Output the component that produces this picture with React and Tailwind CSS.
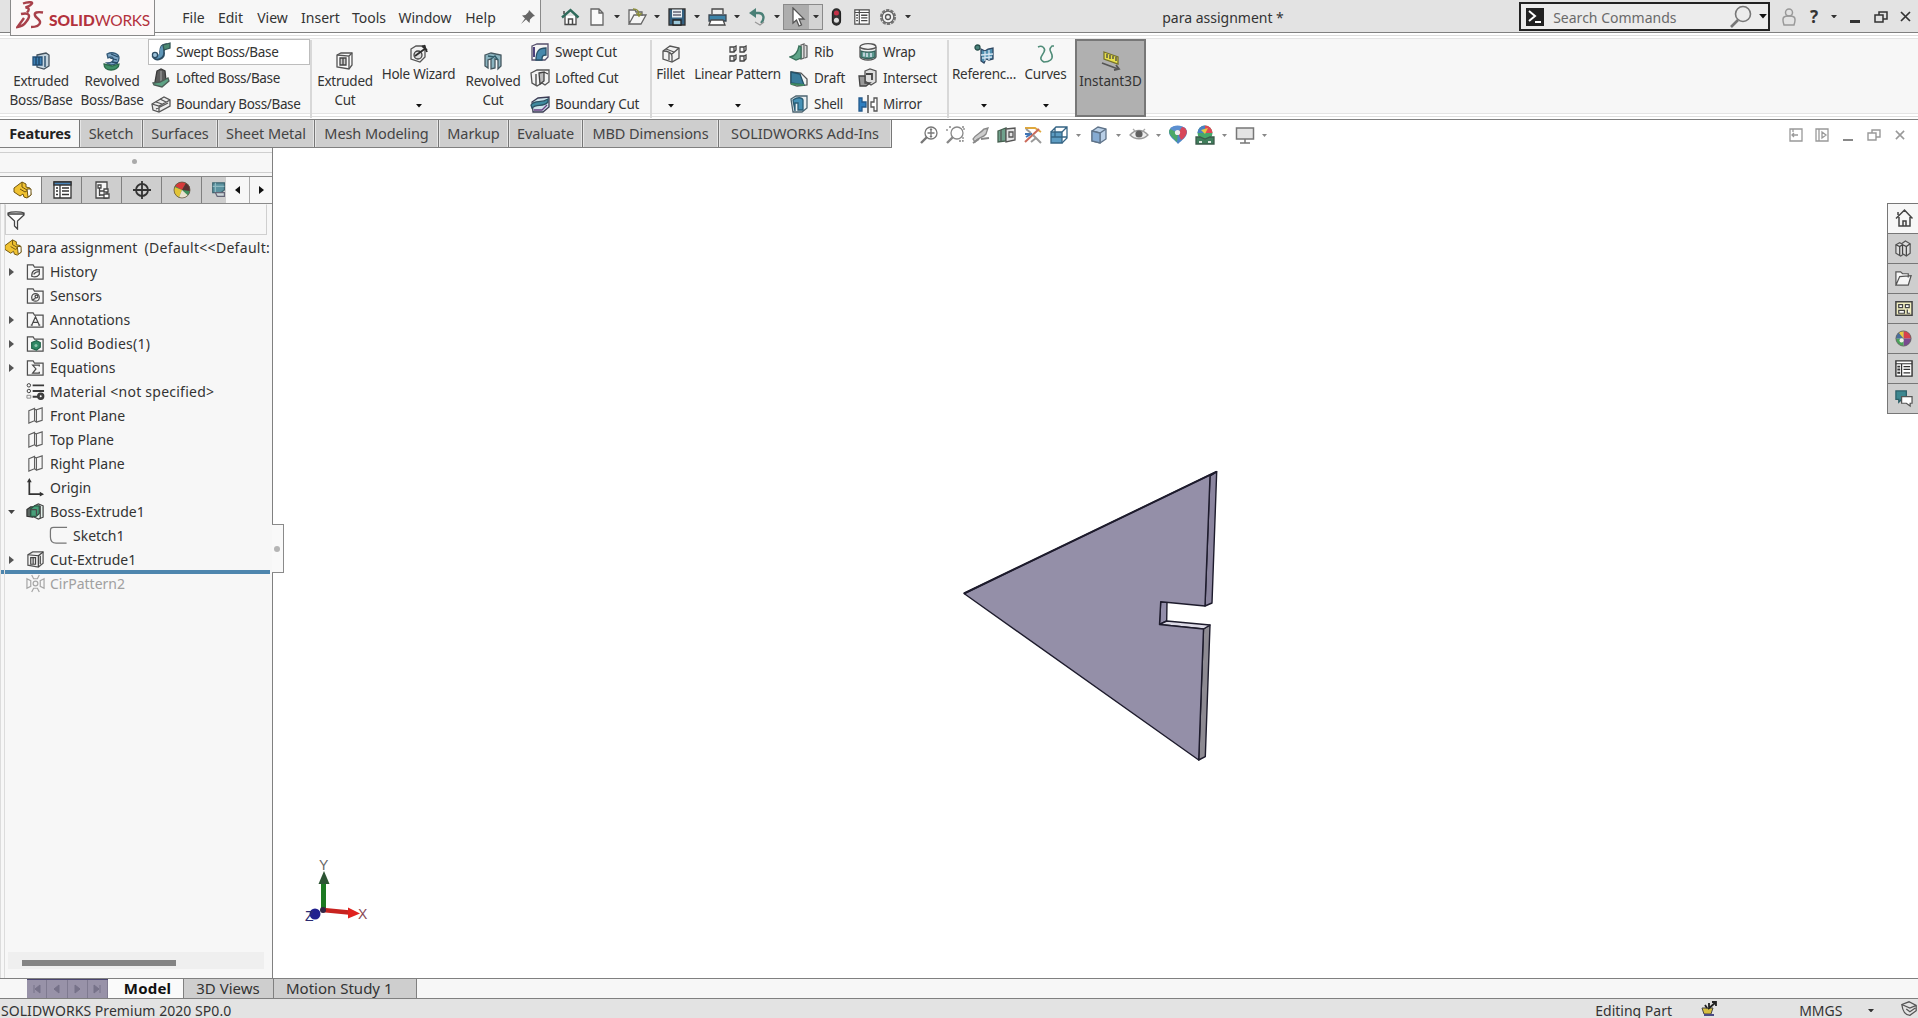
import React from "react";

const K = "#4a4a4a";
const Svg = ({ s = 20, vb = 20, children }) => (
  <svg width={s} height={s} viewBox={`0 0 ${vb} ${vb}`} fill="none" stroke={K} strokeWidth="1.3" className="shrink-0">
    {children}
  </svg>
);

const cube = (fill, edge) => (
  <>
    <path d="M3 6l6-4 8 2v10l-6 4-8-2z" fill={fill} stroke={edge} />
    <path d="M3 6l8 2 6-4M11 8v10" stroke={edge} />
  </>
);
const folder = <path d="M1.500 18V3h6l1.500 2.500h9V18z" stroke="#505050" />;
const plane = <path d="M3 5l6-2.500v13L3 18zM11 4l6-2v13l-6 2zM9 3.500l2 .500M9 15.500l2 1.500" stroke="#606060" strokeWidth="1.200" />;
const ball = (
  <g stroke="none">
    <circle cx="10" cy="10" r="8" fill="#3f8f5a" />
    <path d="M10 10L3 6a8 8 0 0 1 11-3z" fill="#d63a3a" />
    <path d="M10 10l4-7a8 8 0 0 1 4 8z" fill="#5a3030" />
    <path d="M10 10l-7.500-3A8 8 0 0 0 7 17.500z" fill="#e2c437" />
    <path d="M10 10l-3 7.500a8 8 0 0 0 9-2z" fill="#e9e2cf" />
    <circle cx="10" cy="10" r="8" fill="none" stroke="#665544" strokeWidth=".8" />
  </g>
);
const colorBall = (
  <g stroke="none">
    <path d="M10 10V2a8 8 0 0 1 8 8z" fill="#d8404c" />
    <path d="M10 10h8a8 8 0 0 1-8 8z" fill="#7a4a90" />
    <path d="M10 10v8a8 8 0 0 1-8-8z" fill="#4ba35a" />
    <path d="M10 10H2a8 8 0 0 1 8-8z" fill="#4a6f9c" />
    <path d="M10 10L5 4a8 8 0 0 1 5-2z" fill="#e8c840" />
    <circle cx="8" cy="12" r="2.200" fill="#f2eee8" />
    <circle cx="10" cy="10" r="8" stroke="#5a5a5a" strokeWidth=".8" />
  </g>
);
const part = (
  <g stroke="#6f5510" strokeWidth="1">
    <path d="M1 8l8-6 4 2v3l4 1 1 7-4 3-3-1-1-3-3 2-6-4z" fill="#f0c232" />
    <path d="M9 2v5l5 3M7 9l5 3 5-3" fill="none" />
    <path d="M14 9l4 0v6l-3 2z" fill="#fff" />
  </g>
);
const magnifier = <><circle cx="12" cy="8" r="6" /><path d="M8 12l-6 6" strokeWidth="2.400" /></>;

const I = {
  home: <><path d="M5 9v8.500h11V9" fill="#fff" /><path d="M2 10.500L10.500 3l8 7.500" stroke="#2f6b5c" strokeWidth="2.400" /><path d="M8.500 17v-5h4v5M4 4v3" strokeWidth="1.500" /></>,
  doc: <path d="M4 2h8l4 4v12H4zM12 2v4h4" fill="#fafafa" stroke="#666" />,
  open: <><path d="M2 17V3h6l1 2h6v4M2 17L7 8h12l-5 9z" fill="#f6f6f6" stroke="#666" /><path d="M6 2c5 0 6 2 6 6M9.500 6l2.500 3 2.500-3" stroke="#8a8d3a" strokeWidth="1.600" /></>,
  save: <><path d="M2 2h16v16H2z" fill="#346080" stroke="#333" /><path d="M5 2.500h10v8H5z" fill="#e8eef2" stroke="none" /><path d="M6 5h8M6 8h8" stroke="#667" /><path d="M6 13h8v5H6z" fill="#9cc8da" stroke="#222" /></>,
  print: <><path d="M5 7V2h11v5" fill="#eee" /><path d="M2 8h17v6H2z" fill="#3d83a8" stroke="#3b4650" /><path d="M4 13h12l2 5H2z" fill="#fff" /></>,
  undo: <><path d="M7 6h5c5 0 6 6 2 10" stroke="#4b8077" strokeWidth="2.400" /><path d="M9 1L2 6l7 5z" fill="#4b8077" stroke="none" /><path d="M8 15l5 3 4-3" stroke="#999" /></>,
  cursor: <path d="M6 1v15l3.500-3 2.500 6 2.500-1-2.500-6h5z" fill="#fff" stroke="#555" />,
  traffic: <><rect x="6" y="1" width="9" height="18" rx="4.500" fill="#333" stroke="#222" /><circle cx="10.500" cy="5.500" r="2.800" fill="#c33148" stroke="none" /><circle cx="10.500" cy="13.500" r="2.800" fill="#ddd" stroke="none" /></>,
  list: <><path d="M2 2h16v16H2zM7 2v16M2 5h16" fill="#fff" /><path d="M9 8h7M9 11h7M9 14h7M3.500 8h2M3.500 11h2M3.500 14h2" strokeWidth="1.600" /></>,
  gear: <><circle cx="10" cy="10" r="7" stroke="#777" strokeWidth="2.200" strokeDasharray="3.300 1.100" /><circle cx="10" cy="10" r="5.800" stroke="#666" fill="#f3f3f3" /><circle cx="10" cy="10" r="2.500" stroke="#555" /></>,
  extrude: <><path d="M6 4l9-2 3 2v11l-5 3-7-2z" fill="#c4d4de" stroke="#44525e" /><path d="M2 6h9v8H2z" fill="#3c7fb4" stroke="#245078" /><path d="M5 6v8M8 6v8M14 5v11" stroke="#1d4262" /></>,
  revolve: <><path d="M5 3c6-3 12 0 12 4s-3 7-9 7l-3-2c6 0 7-3 6-5S8 6 6 7z" fill="#7ba4c4" stroke="#335a78" /><path d="M8 7l7 2M9 3l7 3M10 11l6 1" stroke="#244a66" /><path d="M2 13l8 2 7-2c0 4-4 6-8 6s-7-2-7-6z" fill="#3f9068" stroke="#2c6a4a" /></>,
  sweep: <><path d="M3 13c3 5 9 2 8-3 0-4 1-6 5-6" stroke="#2c4c62" strokeWidth="5.600" /><path d="M3 13c3 4 8 1 7.500-3 0-4 1-6 5-6" stroke="#5f96b8" strokeWidth="3.400" /><circle cx="4" cy="13" r="2.600" fill="#9cc2da" stroke="#2c4c62" /><path d="M12 3l7-2v5l-6 2z" fill="#4c8a72" stroke="#355" /></>,
  loft: <><path d="M6 3l4-2 4 2 1 10-5 3-6-2z" fill="#5c5c5c" stroke="#3a3a3a" /><path d="M10 3v13" stroke="#999" /><path d="M2 15l7-1 8-4 1 3-7 6-8-2z" fill="#5da284" stroke="#4c5c55" /></>,
  boundary: <><path d="M1 10l12-7 6 3v6L8 18l-6-2z" fill="#ececec" stroke="#555" /><path d="M1 10l7 2 11-6M8 12v6M5 8l6 2M9 5l6 3M5 15l12-6" stroke="#555" /></>,
  cut: <><path d="M2 4l4-2h11v12l-3 4-12-2z" fill="#fafafa" stroke="#555" /><path d="M2 4l12 1v13M14 5l3-3" stroke="#555" /><path d="M5 7h6v7H5zM8 7v7" stroke="#444" fill="#ccc" /></>,
  hole: <><path d="M2 5l5-3h9v11l-5 5-9-3z" fill="#f2f2f2" stroke="#555" /><circle cx="9" cy="11" r="4" fill="#ddd" stroke="#444" /><path d="M6 12L17 4M13 2l5 4M15 1l3 7" stroke="#2e2e2e" strokeWidth="1.800" /></>,
  revcut: <><path d="M2 4l6-2 10 2v11l-3 3V9l-3-1v9l-4 1V8L5 9v8l-3-2z" fill="#8bb4c0" stroke="#465860" /><path d="M8 8l4-3 3 4M5 5l6 1" stroke="#2f5b68" /></>,
  swcut: <><path d="M2 4l5-2h11v13l-3 3H2z" fill="#f4f4f4" stroke="#56506c" /><path d="M6 18c0-9 3-12 10-12v7c-4 0-4 2-4 5z" fill="#4788ac" stroke="#285068" /><path d="M4 5v10" stroke="#3c2e70" strokeWidth="1.800" /></>,
  locut: <><path d="M1 5l6-3h12v12l-4 3-3-2-5 3-5-3z" fill="#f4f4f4" stroke="#555" /><path d="M6 6v11M9 5l5-1v9l-4 3zM14 4l4 2" stroke="#444" fill="#bbb" /></>,
  bocut: <><path d="M2 8l6-4 11-1v10l-6 5-10 0z" fill="#cfe4ec" stroke="#3c3c54" /><path d="M1 11c4-6 10-1 17-6v3c-5 6-11 1-16 6z" fill="#3f8aa0" stroke="#2b5364" /><path d="M4 16h8l5-5" stroke="#6a3d80" /></>,
  fillet: <><path d="M2 7l7-5 9 2v10l-7 4-9-3z" fill="#f2f2f2" stroke="#555" /><path d="M2 7c5 0 9 2 9 5v6M11 10l7-6M5 5l8 3M8 9v7" stroke="#555" /></>,
  pattern: <path d="M2 3h4v5H2zM2 12h4v5H2zM12 3h4v5h-4zM12 12h4v5h-4zM6 3l2-1v4L6 8M16 3l2-1v4l-2 2M6 12l2-1v4l-2 2M16 12l2-1v4l-2 2" stroke="#444" />,
  rib: <><path d="M12 3l3-1v14l-3 1zM16 3l2 1v11l-2 1" fill="#ddd" stroke="#666" /><path d="M1 15C7 14 9 9 10 4l2 1v11l-5 2z" fill="#5ea488" stroke="#37705a" /></>,
  draft: <><path d="M2 4l10 1 6 6v6L8 18l-6-2z" fill="#f0f4f4" stroke="#555" /><path d="M2 4l9 2 4 11-13-2z" fill="#3a7c9c" stroke="#245168" /><path d="M2 16l13 1" stroke="#3e8a60" strokeWidth="2" /></>,
  shell: <><path d="M2 5l5-3h11v12l-5 4H4z" fill="#e8eef0" stroke="#4c6470" /><path d="M4 6c4-3 9-3 10 0v10H9V9H6v8z" fill="#4591b6" stroke="#285c76" /></>,
  wrap: <><path d="M2 5v10c2 4 14 4 16 0V5" fill="#eee" stroke="#555" /><ellipse cx="10" cy="4.500" rx="8" ry="2.800" fill="#f4f4f4" stroke="#555" /><path d="M3 9c3 1.500 11 1.500 14 0v6c-3 2-11 2-14 0z" fill="#5d9a90" stroke="#35605a" /><path d="M6 10.500v4M9 11v4M13 11v4" stroke="#eef" /></>,
  intersect: <><path d="M7 3l5-2 6 2v11l-5 3-6-4z" fill="#dedede" stroke="#555" /><path d="M1 8h6v7l5 0-4 3-6 0z" fill="#999" stroke="#444" /><path d="M8 6h6v6" stroke="#444" strokeWidth="1.800" /></>,
  mirror: <><path d="M1 4h3v4h4v5H4v4H1z" fill="#2f7fc0" stroke="#245a8c" /><path d="M10 1v18" stroke="#333" /><path d="M19 4h-3v4h-3v5h3v4h3z" fill="#fff" stroke="#555" /></>,
  reference: <><path d="M7 5l4 2 3-2 5-1v11l-4 1-3-1-2 4-3-2z" fill="#4f8fb0" stroke="#2f4762" /><path d="M7 11l12-1M8 14l10-1M11 7v10M15 6v10" stroke="#d4e4f0" /><circle cx="3.500" cy="3.500" r="2.500" fill="#4a837c" stroke="#28504c" /></>,
  curves: <path d="M2 3c4-2 8 1 6 5s-6 7 0 10c6 0 9-3 8-7s-4-5 0-9l2 0" stroke="#4f8c78" strokeWidth="1.600" />,
  instant: <><path d="M3 1l14 5v7L3 8z" fill="#e7e04c" stroke="#77732a" /><path d="M6 3v4M9 4v4M12 5v3M15 6v4" stroke="#444" /><path d="M1 12l16 6M13 19l5-1-3-4" stroke="#555" strokeWidth="1.800" /></>,
  zoomfit: <g stroke="#777">{magnifier}<path d="M12 4.500v7M8.500 8h7M11 5l1-1 1 1M11 11l1 1 1-1" /></g>,
  zoomarea: <g stroke="#888">{magnifier}<path d="M4 2h3M2 4v3M17 2h2v3M18 12v4h-4" strokeDasharray="2 1" /></g>,
  prev: <g stroke="#888"><path d="M2 14c3-5 8-6 11-10l4-1-2 6c-3 4-8 3-11 8z" fill="#ccc" /><path d="M10 14l8-1M2 18l6-4" strokeWidth="2" /></g>,
  section: <><path d="M1 6l8-3v13l-8 1z" fill="#6fa18c" stroke="#45604f" /><path d="M9 4l9-1v12l-9 2zM4 5v11M12 7h4v5h-4z" fill="#e4e4e4" stroke="#555" /></>,
  dynamic: <><path d="M2 3h10l6 4" stroke="#e0a83c" strokeWidth="1.800" /><path d="M2 9h7M3 12l5-3" stroke="#3f74b4" strokeWidth="2" /><path d="M2 17L16 4" stroke="#cb6a5a" strokeWidth="2" /><path d="M10 10l8 8M3 4l5 4M8 17l5-4" stroke="#999" strokeWidth="2" /></>,
  orient: <><path d="M2 7h11v11H2z" fill="#5d9cc2" stroke="#356484" /><path d="M2 7l5-5h11v11l-5 5M13 7l5-5M6 3v9M2 12h16" stroke="#356484" /></>,
  display: <>{cube("#b9cfe6", "#5f7389")}<path d="M3 6l8 2v10l-8-2z" fill="#86abd2" stroke="#5f7389" /></>,
  eye: <><path d="M1 10c5-6 13-6 18 0-5 5-13 5-18 0z" fill="#eee" stroke="#999" /><circle cx="10" cy="9" r="3.600" fill="#606060" stroke="none" /><path d="M4 4l2 2M16 4l-2 2" stroke="#aaa" /></>,
  appearance: <><path d="M1 7c0-8 18-8 18 0 0 5-5 8-9 12C7 15 1 12 1 7z" fill="#4d86c6" stroke="none" /><path d="M10 8L2 4C6-1 14 0 18 4z" fill="#5c8fd0" stroke="none" /><path d="M10 8L2 4c-3 5 3 8 7 13z" fill="#4ca868" stroke="none" /><path d="M10 8l4-6c7 1 6 9-1 13z" fill="#d8475a" stroke="none" /><circle cx="9.500" cy="7.500" r="2.600" fill="#eee" stroke="none" /></>,
  scene: <><circle cx="10" cy="8" r="7.500" fill="#45a86a" stroke="none" /><path d="M10 8V.500a7.500 7.500 0 0 1 7.500 7.500z" fill="#df4858" stroke="none" /><path d="M10 8H2.500A7.500 7.500 0 0 1 10 .500z" fill="#4a80c4" stroke="none" /><path d="M6 5l4 4 3-6z" fill="#e8ca40" stroke="none" /><path d="M1 12h4l5 2 5-2h4v7H1z" fill="#407e5c" stroke="#3b5b4b" /><path d="M4 18v-2h3v2zM13 18v-2h3v2z" fill="#dfe9e2" stroke="none" /></>,
  monitor: <path d="M1.500 3h17v11h-17zM10 14v4M5 18h10" fill="#e4e4e4" stroke="#777" strokeWidth="1.500" />,
  features: part,
  property: <><path d="M2 2h17v16H2z" fill="#fff" stroke="#333" /><path d="M2 2h17v3H2z" fill="#4a84b8" stroke="#333" /><path d="M8 5v13" stroke="#333" /><path d="M10 8h7M10 11h7M10 14.500h7M4 8h2M4 11h2M4 14.500h2" stroke="#333" strokeWidth="1.600" /></>,
  config: <><path d="M4 2h11v16H4z" fill="#f5f5f5" stroke="#444" /><path d="M6 5h3v3H6zM7.500 8v8M7.500 11h4M7.500 15h4M12 9h4v3h-4zM12 14h5v4h-5z" fill="#fff" stroke="#444" /></>,
  target: <g stroke="#333" strokeWidth="1.800"><circle cx="10" cy="10" r="6" /><path d="M10 1v18M1 10h18" /></g>,
  ball,
  cam: <><path d="M3 2h13v8l-4 3H3z" fill="#5b93a0" stroke="#3e6570" /><path d="M6 2v11M3 6h13" stroke="#8fbac2" /><path d="M6 13h10v4H8z" fill="#ccd7da" stroke="#667" /></>,
  filter: <path d="M2 3c3-1.500 13-1.500 16 0v2l-6.500 6v8l-3-3v-5L2 5zM2 4h16" fill="#fff" stroke="#444" />,
  history: <>{folder}<path d="M6 15c0-6 3-7 8-7v5c-2 3-5 3-8 2zM8 13c2-3 4-3 6-3" /></>,
  sensors: <>{folder}<circle cx="10" cy="12" r="4" /><circle cx="11" cy="11" r="1.500" /><path d="M6 15l4-2" /></>,
  annotations: <>{folder}<path d="M6 16l4-9 4 9M7.500 13h5M5 16h2M13 16h2" /></>,
  bodies: <>{folder}<path d="M6 9l5-2 4 2v5l-4 3-5-2z" fill="#2f8a66" stroke="#1f6348" /><circle cx="10.500" cy="12" r="1.600" fill="#8cc4ac" stroke="none" /></>,
  equations: <>{folder}<path d="M14 9V7.500H7l3.500 4L7 16h7v-1.500" /></>,
  material: <g stroke="#3a3a3a"><circle cx="3" cy="3.500" r="1.800" strokeWidth="1" /><circle cx="3" cy="9.500" r="1.800" strokeWidth="1" /><path d="M1 14h4v3H1z" strokeWidth="1" stroke="#888" /><path d="M7 3.500h12M7 9.500h12M7 15.500h6" strokeWidth="2" /><circle cx="15.500" cy="15" r="3.200" fill="#444" /><circle cx="15.500" cy="15" r="1" fill="#fff" stroke="none" /></g>,
  plane,
  origin: <><path d="M3.500 3v14H17" stroke="#333" strokeWidth="1.800" /><path d="M3.500 0L6 4.500H1zM19 17l-4.500 2.500v-5z" fill="#333" stroke="none" /></>,
  boss: <><path d="M9 4l4-2 5 2v12l-5 2-4-2z" fill="#e2f0ea" stroke="#444" /><path d="M1 8l4-3h5v10l-3 1-6-1z" fill="#5c6662" stroke="#333" /><path d="M5 7l4-3h5v8l-3 3H5z" fill="#47a07a" stroke="#28523f" /><path d="M15 4v13M5 8h6M11 8v6" /></>,
  sketch: <path d="M19 1.500H5c-3 0-3.500 1-3.500 4v6c0 4 2 6.500 6 6.500h11" stroke="#777" />,
  cutEx: <><path d="M2 5l5-3h11v12l-5 4-11-2z" fill="#f2f2f2" stroke="#555" /><path d="M2 5l11 1v12M13 6l5-4M5 8v7h5V8zM7.500 8v7M15 6v9" stroke="#444" /></>,
  cir: <g stroke="#a8a8a8"><path d="M1 5l4 2v6l-4 2zM19 5l-4 2v6l4 2zM6 1l2 4h4l2-4M6 19l2-4h4l2 4" /><circle cx="10" cy="10" r="2.500" /></g>,
  books: <><path d="M2 6l4-2 2 1 4-3 5 3v10l-4 3-3-2-3 2-5-3z" fill="#ddd" stroke="#555" /><path d="M6 7v10M9 6v10M13 7v10M2 6l4 2 3-2 4 2 4-3" stroke="#444" /></>,
  folderOpen: <path d="M2 17V3h5l2 2h6v4M2 17L6 8l12-1-3 10z" fill="#f6f6f6" stroke="#555" />,
  palette: <><path d="M2 3h17v14H2z" fill="#f2efc0" stroke="#444" strokeWidth="1.600" /><path d="M5 6h4v3H5zM12 6h4v3h-4zM5 12h6v3H5zM14 11v4h3" fill="#fff" stroke="#444" /></>,
  colorBall,
  props: <><path d="M2 2h17v16H2z" fill="#fff" stroke="#333" strokeWidth="1.500" /><path d="M2 5h17M8 5v13" stroke="#333" /><path d="M10 8h7M10 11h7M10 14.500h7" stroke="#333" /><path d="M3.500 8h3M3.500 11h3M3.500 14.500h3" stroke="#333" strokeWidth="2" /></>,
  forum: <><path d="M2 2h11v9H8l-3 3v-3H2z" fill="#3c8790" stroke="#2b5f68" /><path d="M8 8h11v7h-2v3l-4-3H8z" fill="#fff" stroke="#555" /></>,
};

const Icon = ({ n, s = 20 }) => <Svg s={s}>{I[n]}</Svg>;

const Caret = ({ c = "#333", s = 6 }) => (
  <svg width={s} height={s / 2 + 0.5} viewBox="0 0 6 3.500" className="shrink-0"><path d="M0 0h6L3 3.500z" fill={c} /></svg>
);

const Slot = ({ w, children }) => <div className={`flex h-full shrink-0 items-center justify-center ${w}`}>{children}</div>;

const Logo = () => (
  <div className="absolute left-[10px] top-0 flex h-[36px] w-[145px] items-center border-x border-b border-[#8a8a8a] bg-[#fbf8f8] shadow-[0_1px_0_#fff]">
    <svg width="28" height="28" viewBox="0 0 28 28" fill="none" stroke="#a8404a" strokeWidth="2.400" className="mb-[5px] ml-[5px] shrink-0">
      <path d="M7 2.500c4-1.500 10-2 9 0s-4 3-6.500 4c4.500 0 3.500 3 1.500 5" />
      <path d="M5 13c9-2 10 2 5 8-2 3-5 4.500-8.500 5l6.500-9" />
      <path d="M27 11.500c-6-1-9 0-8 3s6 4 5 7.500-6 4-9 4" />
    </svg>
    <div className="ml-[5px] mt-[7px] flex font-['Lato'] text-[15.500px] leading-none text-[#b3323d]">
      <span className="font-black">SOLID</span>
      <span className="tracking-[-0.300px]">WORKS</span>
    </div>
  </div>
);

const qat = [
  ["home", "w-[26px]"], ["doc", "w-[27px]"], ["v", "w-[13px]"], ["open", "w-[27px]"], ["v", "w-[13px]"], ["save", "w-[27px]"],
  ["v", "w-[13px]"], ["print", "w-[27px]"], ["v", "w-[13px]"], ["undo", "w-[27px]"], ["v", "w-[13px]"],
];

const menus = [["File", "w-[38px]"], ["Edit", "w-[36px]"], ["View", "w-[48px]"], ["Insert", "w-[48px]"], ["Tools", "w-[49px]"], ["Window", "w-[63px]"], ["Help", "w-[48px]"]];

const TitleBar = () => (
  <header className="relative flex h-[33px] border-b border-[#808080] bg-[#e3e3e3]">
    <div className="ml-[155px] flex w-[388px] items-center border-r border-[#8a8a8a] bg-[#f7f7f7] pl-[19.500px] pt-[2px]">
      {menus.map(([m, w]) => <span key={m} className={`text-center ${w}`}>{m}</span>)}
      <svg width="16" height="16" viewBox="0 0 16 16" className="ml-[15px]"><path d="M9 1l6 6-2 .500-3 3-.500 3.500L6 10.500 1 15l4-5.500-3-3 3.500-.500 3-3z" fill="#666" /></svg>
    </div>
    <div className="flex items-center pl-[16px] pt-[1px]">
      {qat.map(([n, w], i) => <Slot key={i} w={w}>{n === "v" ? <Caret /> : <Icon n={n} />}</Slot>)}
      <div className="flex h-[26px] w-[40px] border border-[#8a8a8a] bg-[#d3d3d3]">
        <div className="flex w-[25px] items-center justify-center bg-[#adadad]"><Icon n="cursor" /></div>
        <div className="flex w-[13px] items-center justify-center"><Caret /></div>
      </div>
      <Slot w="w-[26px]"><Icon n="traffic" s={18} /></Slot>
      <Slot w="w-[26px]"><Icon n="list" s={18} /></Slot>
      <Slot w="w-[26px]"><Icon n="gear" /></Slot>
      <Slot w="w-[13px]"><Caret /></Slot>
    </div>
    <span className="ml-[248px] w-[112px] self-center whitespace-nowrap pt-[2px]">para assignment *</span>
    <div className="ml-[245px] mt-[2px] flex h-[29px] w-[252px] items-center border-2 border-[#222] bg-[#ececec] pl-[5px]">
      <svg width="18" height="18" viewBox="0 0 18 18"><path d="M0 0h18v18H0z" fill="#222" /><path d="M3 3l6 5-6 5M9 14h6" stroke="#fff" strokeWidth="2" fill="none" /></svg>
      <span className="ml-[9px] w-[176px] pt-[1px] text-[#6a6a6a]">Search Commands</span>
      <svg width="24" height="24" viewBox="0 0 24 24" fill="none" stroke="#777"><circle cx="14" cy="9" r="7.500" strokeWidth="1.600" /><path d="M9 15l-7 7" strokeWidth="2.600" /></svg>
      <span className="ml-[6px]"><Caret s={8} c="#111" /></span>
    </div>
    <div className="ml-[5px] flex items-center pt-[1px]">
      <Slot w="w-[27px]"><svg width="16" height="20" viewBox="0 0 16 20" fill="none" stroke="#999" strokeWidth="1.500"><circle cx="8" cy="5.500" r="3.500" /><path d="M3 18c-3-9 1-9 5-9s8 0 5 9z" /></svg></Slot>
      <Slot w="w-[24px]"><span className="text-[17px] font-bold text-[#333]">?</span></Slot>
      <Slot w="w-[16px]"><Caret /></Slot>
      <Slot w="w-[26px]"><div className="mt-[9px] h-[3px] w-[10px] bg-[#333]" /></Slot>
      <Slot w="w-[25px]"><svg width="14" height="12" viewBox="0 0 14 12" fill="none" stroke="#333" strokeWidth="1.500"><path d="M1 4h8v7H1zM5 4V1h8v7H9" /></svg></Slot>
      <Slot w="w-[25px]"><svg width="11" height="11" viewBox="0 0 11 11" stroke="#333" strokeWidth="1.700"><path d="M1 1l9 9M10 1l-9 9" /></svg></Slot>
    </div>
    <Logo />
  </header>
);

const Big = ({ n, a, b, w, top }) => (
  <div className={`flex shrink-0 flex-col items-center whitespace-nowrap leading-[19px] ${w} ${top ? "pt-[11px]" : "pt-[18px]"}`}>
    <Icon n={n} />
    <span className="mt-[1px]">{a}</span>
    {b && <span>{b}</span>}
    {top && <span className="mt-[20px]"><Caret c="#111" /></span>}
  </div>
);

const Stack = ({ w, rows }) => (
  <div className={`flex shrink-0 flex-col whitespace-nowrap pt-[6px] ${w}`}>
    {rows.map(([n, t, on]) => (
      <div key={t} className={`flex h-[26px] items-center pl-[2px] ${on ? "border border-[#bdbdbd] bg-white" : "border border-transparent"}`}>
        <Icon n={n} />
        <span className="ml-[5px]">{t}</span>
      </div>
    ))}
  </div>
);

const Sep = () => <div className="mt-[7px] h-[78px] w-[2px] shrink-0 bg-[#d8d8d8]" />;

const Ribbon = () => (
  <section className="flex h-[87px] border-b border-[#808080] bg-[#f7f7f7] text-[13.500px] tracking-[-0.250px] shadow-[inset_0_2px_0_#fff,inset_0_3px_0_#dedede,inset_0_5px_0_#fff,inset_0_6px_0_#e4e4e4,inset_0_-2px_0_#fff,inset_0_-3px_0_#dedede,inset_0_-5px_0_#fff,inset_0_-6px_0_#e4e4e4]">
    <Big n="extrude" a="Extruded" b="Boss/Base" w="w-[76px] pl-[6px]" />
    <Big n="revolve" a="Revolved" b="Boss/Base" w="w-[72px]" />
    <Stack w="w-[162px] tracking-[-0.350px]" rows={[["sweep", "Swept Boss/Base", true], ["loft", "Lofted Boss/Base"], ["boundary", "Boundary Boss/Base"]]} />
    <Sep />
    <Big n="cut" a="Extruded" b="Cut" w="w-[66px]" />
    <Big n="hole" a="Hole Wizard" w="w-[81px]" top />
    <Big n="revcut" a="Revolved" b="Cut" w="w-[68px]" />
    <Stack w="w-[123px]" rows={[["swcut", "Swept Cut"], ["locut", "Lofted Cut"], ["bocut", "Boundary Cut"]]} />
    <Sep />
    <Big n="fillet" a="Fillet" w="w-[37px]" top />
    <Big n="pattern" a="Linear Pattern" w="w-[97px]" top />
    <Stack w="w-[69px]" rows={[["rib", "Rib"], ["draft", "Draft"], ["shell", "Shell"]]} />
    <Stack w="w-[92px]" rows={[["wrap", "Wrap"], ["intersect", "Intersect"], ["mirror", "Mirror"]]} />
    <Sep />
    <Big n="reference" a="Referenc..." w="w-[70px]" top />
    <Big n="curves" a="Curves" w="w-[53px]" top />
    <div className="ml-[3px] mt-[6px] flex h-[78px] w-[71px] flex-col items-center border-2 border-[#777] bg-[#b0b0b0] pt-[10px] leading-[19px] tracking-[0px]">
      <Icon n="instant" />
      <span className="mt-[1px]">Instant3D</span>
    </div>
  </section>
);

const tabs = [
  ["Sketch", "w-[63px]"], ["Surfaces", "w-[75px]"], ["Sheet Metal", "w-[97px]"], ["Mesh Modeling", "w-[124px]"], ["Markup", "w-[70px]"],
  ["Evaluate", "w-[74px]"], ["MBD Dimensions", "w-[136px]"], ["SOLIDWORKS Add-Ins", "w-[173px]"],
];
const viewBar = [
  ["zoomfit", "w-[26px]"], ["zoomarea", "w-[26px]"], ["prev", "w-[26px]"], ["section", "w-[26px]"], ["dynamic", "w-[26px]"], ["orient", "w-[26px]"], ["v", "w-[13px]"],
  ["display", "w-[27px]"], ["v", "w-[13px]"], ["eye", "w-[27px]"], ["v", "w-[13px]"], ["appearance", "w-[26px]"], ["scene", "w-[27px]"], ["v", "w-[13px]"], ["monitor", "w-[27px]"], ["v", "w-[13px]"],
];

const TabRow = () => (
  <nav className="flex h-[28px] bg-white">
    <div className="flex whitespace-nowrap border-b border-[#808080] bg-[#cecece] text-[14.500px] tracking-[-0.080px] text-[#444]">
      <div className="flex w-[79px] items-center justify-center bg-[#f7f7f7] pl-[1px] font-bold tracking-[-0.200px] text-[#222]">Features</div>
      {tabs.map(([t, w]) => (
        <div key={t} className={`flex items-center justify-center border-l border-[#777] shadow-[inset_1px_0_0_#e6e6e6,inset_-1px_0_0_#e6e6e6] ${w}`}>{t}</div>
      ))}
      <div className="w-px bg-[#777]" />
    </div>
    <div className="ml-[24px] flex items-center pt-[2px]">
      {viewBar.map(([n, w], i) => <Slot key={i} w={w}>{n === "v" ? <Caret c="#888" s={5} /> : <Icon n={n} />}</Slot>)}
    </div>
    <div className="ml-auto flex items-center pr-[5px] pt-[2px]">
      <Slot w="w-[26px]"><svg width="14" height="14" viewBox="0 0 14 14" fill="none" stroke="#999" strokeWidth="1.300"><path d="M4 4V1h9v12H1V1h3M9 7H3M5 5L3 7l2 2" /></svg></Slot>
      <Slot w="w-[26px]"><svg width="14" height="14" viewBox="0 0 14 14" fill="none" stroke="#999" strokeWidth="1.300"><path d="M1 1h12v12H1zM4 1v12M7 4l4 3-4 3z" /></svg></Slot>
      <Slot w="w-[26px]"><div className="mt-[9px] h-[2px] w-[10px] bg-[#888]" /></Slot>
      <Slot w="w-[26px]"><svg width="14" height="12" viewBox="0 0 14 12" fill="none" stroke="#999" strokeWidth="1.400"><path d="M1 4h8v7H1zM5 4V1h8v7H9" /></svg></Slot>
      <Slot w="w-[26px]"><svg width="10" height="10" viewBox="0 0 11 11" stroke="#999" strokeWidth="1.700"><path d="M1 1l9 9M10 1l-9 9" /></svg></Slot>
    </div>
  </nav>
);

const tree = [
  ["history", "History", "r"], ["sensors", "Sensors"], ["annotations", "Annotations", "r"], ["bodies", "Solid Bodies(1)", "r"], ["equations", "Equations", "r"],
  ["material", "Material <not specified>"], ["plane", "Front Plane"], ["plane", "Top Plane"], ["plane", "Right Plane"], ["origin", "Origin"],
  ["boss", "Boss-Extrude1", "d"], ["sketch", "Sketch1", "", true], ["cutEx", "Cut-Extrude1", "r"], ["cir", "CirPattern2"],
];

const SidePanel = () => (
  <aside className="relative z-10 flex h-full w-[273px] shrink-0 flex-col border-r border-[#808080] bg-[#f7f7f7]">
    <div className="mt-[4px] flex h-[21px] items-center justify-center border-y border-[#cfcfcf] pr-[3px]">
      <div className="mb-[2px] h-[5px] w-[5px] rounded-full bg-[#aaa]" />
    </div>
    <div className="mt-[3px] flex h-[28px] border-y border-[#8a8a8a] bg-[#cecece]">
      <Slot w="w-[41px] bg-[#fafafa] pl-[4px]"><Icon n="features" /></Slot>
      {["property", "config", "target", "ball"].map((n) => (
        <Slot key={n} w="w-[40px] border-l border-[#808080]"><Icon n={n} /></Slot>
      ))}
      <Slot w="w-[25px] border-l border-[#808080] pl-[10px]"><Icon n="cam" s={18} /></Slot>
      <Slot w="w-[23px] bg-[#f7f7f7]"><svg width="5" height="8" viewBox="0 0 5 8"><path d="M5 0v8L0 4z" fill="#111" /></svg></Slot>
      <Slot w="w-[23px] border-l border-[#aaa] bg-[#f7f7f7]"><svg width="5" height="8" viewBox="0 0 5 8"><path d="M0 0v8l5-4z" fill="#111" /></svg></Slot>
    </div>
    <div className="ml-[5px] flex h-[31px] w-[262px] items-center border border-[#cfcfcf] border-t-transparent"><Icon n="filter" /></div>
    <div className="flex h-[24px] w-[270px] items-center overflow-hidden whitespace-nowrap pl-[4px] pt-[1px]">
      <Icon n="features" s={19} />
      <span className="ml-[4px] whitespace-pre">para assignment  </span>
      <span className="tracking-[0.300px]">(Default&lt;&lt;Default:</span>
    </div>
    {tree.map(([n, t, arrow, sub]) => (
      <div key={t} className={`flex h-[24px] items-center whitespace-nowrap pt-[1px] ${n === "cir" ? "text-[#a0a0a0]" : ""}`}>
        <div className="flex w-[26px] justify-center pr-[3px]">
          {arrow === "r" && <svg width="5" height="8" viewBox="0 0 5 8"><path d="M0 0v8l5-4z" fill="#555" /></svg>}
          {arrow === "d" && <Caret s={7} c="#444" />}
        </div>
        <div className={`flex ${sub ? "ml-[23px]" : ""}`}><Icon n={n} s={19} /></div>
        <span className={`ml-[5px] ${n === "material" || n === "bodies" ? "tracking-[0.250px]" : ""}`}>{t}</span>
      </div>
    ))}
    <div className="absolute left-0 top-[422px] h-[4px] w-[270px] bg-[#4e86ae]" />
    <div className="absolute left-[272px] top-[376px] flex h-[49px] w-[12px] items-center border border-l-0 border-[#8a8a8a] bg-[#f9f9f9] pl-[2px]"><div className="h-[6px] w-[6px] rounded-full bg-[#b5b5b5]" /></div>
    <div className="mb-[9px] ml-[8px] mt-auto flex h-[17px] w-[256px] items-center bg-[#efefef]">
      <div className="ml-[14px] mt-[5px] h-[6px] w-[154px] bg-[#848484]" />
    </div>
    <div className="absolute bottom-0 left-0 top-[56px] w-[5px] border-x border-[#dcdcdc]" />
  </aside>
);

const Viewport = () => (
  <main className="relative flex min-w-0 flex-1 bg-white">
    <svg width="1645" height="830" viewBox="273 148 1645 830" className="block" strokeLinejoin="round">
      <g stroke="#1d1b2c" strokeWidth="1.400">
        <path d="M1210 476L1216.700 471.700 1212 603 1205 606z" fill="#8b859f" />
        <path d="M1203.500 629L1210 625 1205.300 756.700 1198.700 760z" fill="#8d8a92" />
        <path d="M1160.700 601.700L1167 602.300 1166.700 621 1159.500 624.500z" fill="#938eaa" />
        <path d="M1159.500 624.500L1166.700 621 1210 625 1203.500 629z" fill="#dcdae6" />
        <path d="M964 593.500L1216.700 471.700 1210 476 1205 606 1160.700 601.700 1159.500 624.500 1203.500 629 1198.700 760z" fill="#948fa8" />
        <path d="M964 593.500L1216.700 471.700" strokeWidth="2" />
      </g>
      <path d="M323.500 910V880" stroke="#1c7a22" strokeWidth="5" />
      <path d="M324 871l-5.500 13h11z" fill="#2c5434" />
      <path d="M323 910l26 2.500" stroke="#c8231f" strokeWidth="4.500" />
      <path d="M360 913.500l-12-6v11z" fill="#e0221e" />
      <circle cx="315" cy="914" r="5.500" fill="#20208e" />
      <circle cx="323" cy="910" r="3" fill="#332544" />
      <g fontFamily="Liberation Sans" fontSize="14">
        <text x="319" y="870" fill="#666">Y</text>
        <text x="358" y="919" fill="#8a4a55">X</text>
        <text x="305" y="921" fill="#2a2a70">Z</text>
      </g>
    </svg>
    <div className="absolute right-0 top-[55px] flex w-[31px] flex-col border-l border-t border-[#777]">
      {["home", "books", "folderOpen", "palette", "colorBall", "props", "forum"].map((n, i) => (
        <div key={n} className={`flex h-[30px] items-center justify-center border-b border-[#777] pb-[1px] pl-[1px] ${i === 0 ? "bg-[#f7f7f7]" : "bg-[#cecece]"}`}>
          {i === 0 ? <Svg><path d="M5 9v9h11V9M2 10.500L10.500 2l8 8.500M9 18v-5h3v5M4 4v3" stroke="#444" strokeWidth="1.500" /></Svg> : <Icon n={n} s={19} />}
        </div>
      ))}
    </div>
  </main>
);

const BottomTabs = () => (
  <nav className="flex h-[21px] whitespace-nowrap border-y border-[#808080] bg-[#f7f7f7] text-[15px] leading-none">
    <div className="ml-[27px] flex w-[81px] border-t border-[#4a4670] bg-[#9892a8]">
      {["M9 1v8L4 5zM3 1v8", "M8 1v8L3 5z", "M3 1v8l5-4z", "M2 1v8l5-4zM8 1v8"].map((d) => (
        <div key={d} className="flex flex-1 items-center justify-center border-r border-[#7f7a90]"><svg width="11" height="10" viewBox="0 0 11 10"><path d={d} fill="#777289" stroke="#777289" /></svg></div>
      ))}
    </div>
    <div className="flex w-[75px] items-center justify-center bg-[#fafafa] pl-[4px] font-bold tracking-[0.200px] text-[#111]">Model</div>
    <div className="flex w-[90px] items-center justify-center border-l border-[#808080] bg-[#cecece] pr-[1px] text-[#333]">3D Views</div>
    <div className="flex w-[144px] items-center border-x border-[#808080] bg-[#cecece] pl-[12px] text-[#333]">Motion Study 1</div>
  </nav>
);

const StatusBar = () => (
  <footer className="flex h-[19px] items-end whitespace-nowrap bg-[#e3e3e3] leading-[14px]">
    <span className="w-[1597px] pl-[1px] tracking-[0.050px]">SOLIDWORKS Premium 2020 SP0.0</span>
    <span className="w-[106px]">Editing Part</span>
    <svg width="18" height="18" viewBox="0 0 18 18"><path d="M1 8h11l-2 6H3z" fill="#d6bd3e" stroke="#444" /><path d="M3 15h10" stroke="#4a4a86" strokeWidth="2" /><path d="M7 9l7-6M11 2h4v4M4 5l2 3M8 3v4" stroke="#222" strokeWidth="1.800" fill="none" /></svg>
    <span className="ml-[80px] w-[69px]">MMGS</span>
    <span className="mb-[6px] flex w-[32px]"><Caret /></span>
    <svg width="18" height="18" viewBox="0 0 20 20" fill="none" stroke="#555" strokeWidth="1.400"><path d="M2 5l8-3 8 4v6l-7 5c-5 0-8-4-9-12zM2 5l9 4 7-3M7 10l4 3 6-4" /></svg>
  </footer>
);

export default function App() {
  return (
    <div className="flex h-[1018px] w-[1918px] flex-col overflow-hidden bg-white font-['Noto_Sans','Open_Sans',sans-serif] text-[14px] text-[#333]">
      <TitleBar />
      <Ribbon />
      <TabRow />
      <div className="flex h-[830px]">
        <SidePanel />
        <Viewport />
      </div>
      <BottomTabs />
      <StatusBar />
    </div>
  );
}
